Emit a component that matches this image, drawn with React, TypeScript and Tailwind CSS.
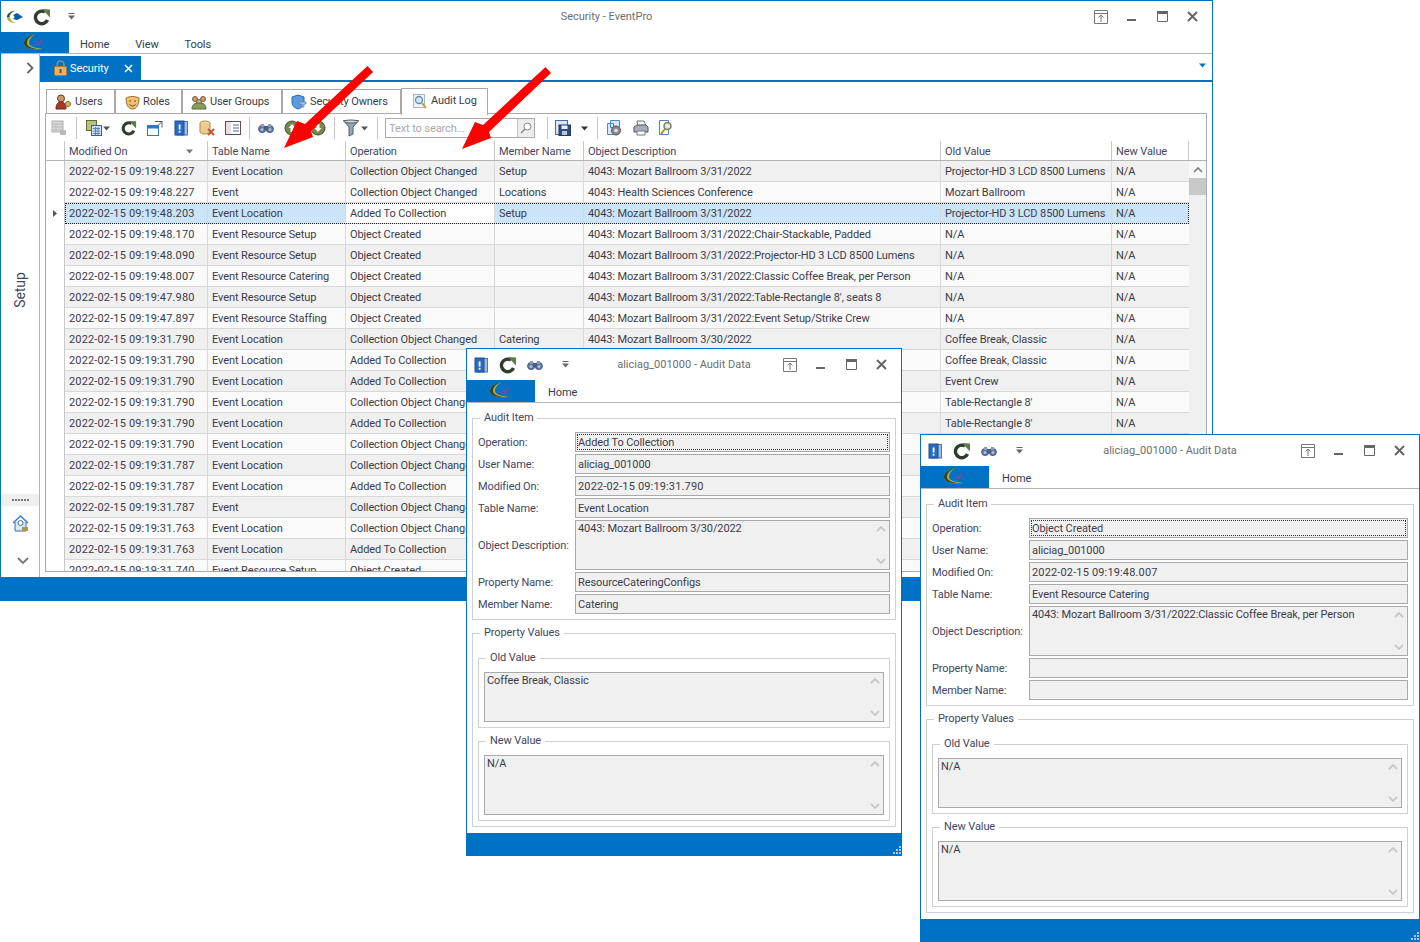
import type { ReactNode } from "react";

const rows = [
  ["2022-02-15 09:19:48.227", "Event Location", "Collection Object Changed", "Setup", "4043: Mozart Ballroom 3/31/2022", "Projector-HD 3 LCD 8500 Lumens"],
  ["2022-02-15 09:19:48.227", "Event", "Collection Object Changed", "Locations", "4043: Health Sciences Conference", "Mozart Ballroom"],
  ["2022-02-15 09:19:48.203", "Event Location", "Added To Collection", "Setup", "4043: Mozart Ballroom 3/31/2022", "Projector-HD 3 LCD 8500 Lumens"],
  ["2022-02-15 09:19:48.170", "Event Resource Setup", "Object Created", "", "4043: Mozart Ballroom 3/31/2022:Chair-Stackable, Padded", "N/A"],
  ["2022-02-15 09:19:48.090", "Event Resource Setup", "Object Created", "", "4043: Mozart Ballroom 3/31/2022:Projector-HD 3 LCD 8500 Lumens", "N/A"],
  ["2022-02-15 09:19:48.007", "Event Resource Catering", "Object Created", "", "4043: Mozart Ballroom 3/31/2022:Classic Coffee Break, per Person", "N/A"],
  ["2022-02-15 09:19:47.980", "Event Resource Setup", "Object Created", "", "4043: Mozart Ballroom 3/31/2022:Table-Rectangle 8', seats 8", "N/A"],
  ["2022-02-15 09:19:47.897", "Event Resource Staffing", "Object Created", "", "4043: Mozart Ballroom 3/31/2022:Event Setup/Strike Crew", "N/A"],
  ["2022-02-15 09:19:31.790", "Event Location", "Collection Object Changed", "Catering", "4043: Mozart Ballroom 3/30/2022", "Coffee Break, Classic"],
  ["2022-02-15 09:19:31.790", "Event Location", "Added To Collection", "", "", "Coffee Break, Classic"],
  ["2022-02-15 09:19:31.790", "Event Location", "Added To Collection", "", "", "Event Crew"],
  ["2022-02-15 09:19:31.790", "Event Location", "Collection Object Changed", "", "", "Table-Rectangle 8'"],
  ["2022-02-15 09:19:31.790", "Event Location", "Added To Collection", "", "", "Table-Rectangle 8'"],
  ["2022-02-15 09:19:31.790", "Event Location", "Collection Object Changed", "", "", ""],
  ["2022-02-15 09:19:31.787", "Event Location", "Collection Object Changed", "", "", ""],
  ["2022-02-15 09:19:31.787", "Event Location", "Added To Collection", "", "", ""],
  ["2022-02-15 09:19:31.787", "Event", "Collection Object Changed", "", "", ""],
  ["2022-02-15 09:19:31.763", "Event Location", "Collection Object Changed", "", "", ""],
  ["2022-02-15 09:19:31.763", "Event Location", "Added To Collection", "", "", ""],
  ["2022-02-15 09:19:31.740", "Event Resource Setup", "Object Created", "", "", ""],
];

function LogoBlock() {
  return (
    <svg width="24" height="20" viewBox="0 0 24 20">
      <path d="M13 1C5 2 0 7 1 11c1 4 8 6 19 5-9-1-14-3-14-6 0-4 3-7 7-9z" fill="#b5ad4c" />
      <path d="M13 1C7 3 4 6 4 10c0 3 4 5 10 6-8 0-12-2-13-5C0 7 5 2 13 1z" fill="#33452f" />
      <path d="M10 12l11-7-3 7z" fill="#5a55a8" />
    </svg>
  );
}

function LogoSmall() {
  return (
    <svg width="18" height="16" viewBox="0 0 18 16">
      <path d="M9 2C4 2 1 5 1 8c0 4 4 6 9 6-4-1-6-3-6-6 0-3 2-5 5-6z" fill="#b5ad4c" />
      <path d="M9 2C5 2 1 5 1 8l2 0c0-3 3-5 6-6z" fill="#24404f" />
      <path d="M7 6l4-2 6 4-6 3-4-1c2-1 2-3 0-4z" fill="#0c5ea8" />
    </svg>
  );
}

function Refresh() {
  return (
    <svg width="18" height="18" viewBox="0 0 18 18">
      <path d="M12 4A6.300 6.300 0 1 0 14.500 12" fill="none" stroke="#2f3d2d" strokeWidth="3.400" />
      <path d="M9 1l8 .5 0 8z" fill="#5e7d46" />
    </svg>
  );
}

function BookIcon() {
  return (
    <svg width="16" height="16" viewBox="0 0 16 16">
      <rect x="4" y="1.500" width="10.500" height="13.500" fill="#9dbde4" stroke="#4a78b0" />
      <rect x="2" y="1" width="9" height="14" fill="#2a6cc0" stroke="#1c4f94" />
      <rect x="5.700" y="4.500" width="1.800" height="5" fill="#fff" />
      <rect x="5.700" y="10.800" width="1.800" height="1.800" fill="#fff" />
    </svg>
  );
}

function Binoculars() {
  return (
    <svg width="16" height="16" viewBox="0 0 16 16">
      <circle cx="4.200" cy="9" r="3.600" fill="#5d78a6" stroke="#4a5a7c" />
      <circle cx="11.800" cy="9" r="3.600" fill="#5d78a6" stroke="#4a5a7c" />
      <rect x="3" y="4" width="3" height="3" fill="#8a9aba" />
      <rect x="10" y="4" width="3" height="3" fill="#8a9aba" />
      <rect x="6" y="6" width="4" height="4" fill="#4b5c7e" />
      <circle cx="4" cy="9.500" r="1.500" fill="#a9bcd9" />
      <circle cx="12" cy="9.500" r="1.500" fill="#a9bcd9" />
    </svg>
  );
}

function Caret({ color = "#555" }: { color?: string }) {
  return (
    <svg width="7" height="5" viewBox="0 0 7 5" className="block">
      <path d="M0 0.500h7L3.500 4.500z" fill={color} />
    </svg>
  );
}

function QatDrop() {
  return (
    <svg width="7" height="7" viewBox="0 0 7 7" className="block">
      <rect x="0.500" y="0" width="6" height="1" fill="#666" />
      <path d="M0 2.500h7L3.500 6.500z" fill="#666" />
    </svg>
  );
}

function PinBtn() {
  return (
    <svg width="14" height="14" viewBox="0 0 14 14">
      <path d="M.5.500h13v13H.5zM.5 3.500h13" fill="none" stroke="#777" />
      <path d="M7 12V5M4.500 7.500L7 5l2.500 2.500" fill="none" stroke="#777" />
    </svg>
  );
}

function WindowButtons() {
  return (
    <div className="flex items-center pr-[5px] h-full">
      <div className="w-[30px] flex justify-center"><PinBtn /></div>
      <div className="w-[31px] flex justify-center">
        <svg width="10" height="14" viewBox="0 0 10 14"><rect y="9" width="9" height="2" fill="#666" /></svg>
      </div>
      <div className="w-[30px] flex justify-center">
        <svg width="11" height="11" viewBox="0 0 11 11"><path d="M.5 2.500h10v8H.5z" fill="none" stroke="#666" /><rect width="11" height="2.500" fill="#666" /></svg>
      </div>
      <div className="w-[30px] flex justify-center">
        <svg width="11" height="11" viewBox="0 0 11 11"><path d="M1 1l9 9M10 1l-9 9" fill="none" stroke="#666" strokeWidth="2" /></svg>
      </div>
    </div>
  );
}

function Grip() {
  const dots = [[10, 1], [7, 4], [10, 4], [4, 7], [7, 7], [10, 7]];
  return (
    <svg width="12" height="9" viewBox="0 0 12 9">
      {dots.map(([x, y]) => <rect key={`${x}-${y}`} x={x} y={y} width="2" height="2" fill="#a9cbe8" />)}
    </svg>
  );
}

function Legend({ children }: { children: ReactNode }) {
  return <legend className="ml-[2px] px-[4px] h-[16px] leading-[16px] text-[#44465e]">{children}</legend>;
}

function Field({ label, value, focus, tall, stamp }: { label: string; value: string; focus?: boolean; tall?: boolean; stamp?: boolean }) {
  return (
    <div className="flex">
      <div className={`w-[97px] shrink-0 flex items-center whitespace-nowrap text-[#44465e] ${tall ? "h-[50px]" : "h-[20px]"}`}>{label}</div>
      {tall ? <Memo value={value} h="h-[50px]" /> : (
        <div className="flex-1 h-[20px] bg-[#f0f0f0] border border-[#a9a9a9] flex items-center p-[1px] min-w-0">
          <div className={`w-full h-full flex items-center whitespace-nowrap ${focus ? "outline-1 outline-dotted outline-[#333] -outline-offset-1" : ""} ${stamp ? "tracking-[0.15px]" : ""} pl-[1px] text-[#3c3c48]`}>{value}</div>
        </div>
      )}
    </div>
  );
}

function Memo({ value, h }: { value: string; h: string }) {
  return (
    <div className={`flex-1 min-w-0 ${h} bg-[#f0f0f0] border border-[#a9a9a9] flex justify-between`}>
      <div className="pl-[2px] leading-[14px] pt-[1px] text-[#3c3c48] whitespace-nowrap">{value}</div>
      <div className="w-[16px] shrink-0 flex flex-col justify-between items-center py-[5px]">
        <svg width="10" height="6" viewBox="0 0 10 6"><path d="M1 5l4-4 4 4" fill="none" stroke="#c8c8c8" strokeWidth="1.800" /></svg>
        <svg width="10" height="6" viewBox="0 0 10 6"><path d="M1 1l4 4 4-4" fill="none" stroke="#c8c8c8" strokeWidth="1.800" /></svg>
      </div>
    </div>
  );
}

type AuditData = {
  operation: string; user: string; modified: string; table: string; description: string;
  property: string; member: string; oldValue: string; newValue: string;
};

function AuditDialog({ className, data }: { className: string; data: AuditData }) {
  return (
    <div className={`absolute bg-white border border-[#0072c6] flex flex-col ${className}`}>
      <div className="h-[31px] shrink-0 relative flex items-center justify-between">
        <div className="flex items-center">
          <div className="ml-[6px]"><BookIcon /></div>
          <div className="ml-[10px]"><Refresh /></div>
          <div className="ml-[10px]"><Binoculars /></div>
          <div className="ml-[19px]"><QatDrop /></div>
        </div>
        <div className="absolute inset-x-0 pb-[1px] text-center tracking-normal text-[#6e6e6e] pointer-events-none">aliciag_001000 - Audit Data</div>
        <WindowButtons />
      </div>
      <div className="h-[23px] shrink-0 flex border-b border-[#b4b4b4]">
        <div className="w-[68px] bg-[#0072c6] flex items-center justify-center"><LogoBlock /></div>
        <div className="ml-[13px] flex items-center text-[#333c4e] pt-[2px]">Home</div>
      </div>
      <div className="px-[5px] pt-[7px] flex-1 flex flex-col min-w-0">
        <fieldset className="min-w-0 border border-[#d0d0d0] px-[5px] pb-[5px]">
          <Legend>Audit Item</Legend>
          <div className="pt-[6px] flex flex-col gap-[2px]">
            <Field label="Operation:" value={data.operation} focus />
            <Field label="User Name:" value={data.user} />
            <Field label="Modified On:" value={data.modified} stamp />
            <Field label="Table Name:" value={data.table} />
            <Field label="Object Description:" value={data.description} tall />
            <Field label="Property Name:" value={data.property} />
            <Field label="Member Name:" value={data.member} />
          </div>
        </fieldset>
        <fieldset className="min-w-0 mt-[5px] border border-[#d0d0d0] px-[5px] pb-[5px]">
          <Legend>Property Values</Legend>
          <fieldset className="min-w-0 mt-[9px] border border-[#d0d0d0] px-[5px] pb-[5px]">
            <Legend>Old Value</Legend>
            <div className="pt-[6px] flex"><Memo value={data.oldValue} h="h-[50px]" /></div>
          </fieldset>
          <fieldset className="min-w-0 mt-[5px] border border-[#d0d0d0] px-[5px] pb-[5px]">
            <Legend>New Value</Legend>
            <div className="pt-[6px] flex"><Memo value={data.newValue} h="h-[60px]" /></div>
          </fieldset>
        </fieldset>
      </div>
      <div className="h-[23px] shrink-0 bg-[#0072c6] flex items-end justify-end pr-[1px] pb-[2px] -mx-[1px] -mb-[1px]"><Grip /></div>
    </div>
  );
}

function SubTab({ icon, label, active, className }: { icon: ReactNode; label: string; active?: boolean; className: string }) {
  return (
    <div className={`${className} shrink-0 border border-[#a9a9a9] flex items-center whitespace-nowrap text-[#3c3c48] ${active ? "h-[27px] border-b-0 bg-white z-10 -mb-[1px]" : "h-[25px] border-b-0"}`}>
      {icon}
      <span className={`ml-[3px] ${active ? "pb-[3px]" : "pb-[1px]"}`}>{label}</span>
    </div>
  );
}

function Grid() {
  return (
    <svg width="16" height="16" viewBox="0 0 16 16">
      <rect x="1" y="1" width="11" height="11" fill="#d8d8d8" stroke="#b0b0b0" />
      <path d="M1 4h11M1 7h11M1 10h11M5 4v8" stroke="#bdbdbd" />
      <rect x="9" y="10" width="6" height="5" rx="1" fill="#b8b8b8" />
    </svg>
  );
}

function Sep({ className }: { className: string }) {
  return <div className={`${className} w-px h-[22px] bg-[#c4c4c4]`} />;
}

function Toolbar() {
  return (
    <div className="h-[27px] flex items-center pl-[5px] pt-[1px]">
      <Grid />
      <Sep className="ml-[9px]" />
      <svg className="ml-[9px]" width="16" height="16" viewBox="0 0 16 16">
        <rect x=".5" y=".5" width="10" height="10" fill="#b9c47a" stroke="#5c6b2e" />
        <rect x="5.500" y="5.500" width="10" height="10" fill="#cfe0f5" stroke="#2e62a8" />
        <path d="M7 8.500h7M7 11h7M7 13.500h7M9.500 7v8M12 7v8" stroke="#5684c0" />
      </svg>
      <div className="ml-[1px]"><Caret /></div>
      <div className="ml-[11px] w-[16px] h-[16px] flex items-center justify-center"><Refresh /></div>
      <svg className="ml-[10px]" width="16" height="16" viewBox="0 0 16 16">
        <rect x=".5" y="5.500" width="11" height="10" fill="#fff" stroke="#2f78c4" />
        <rect x=".5" y="5.500" width="11" height="3" fill="#2f78c4" />
        <path d="M8 1.500h7v6M15 1.500l-4 4" fill="none" stroke="#556" />
      </svg>
      <div className="ml-[10px]"><BookIcon /></div>
      <svg className="ml-[10px]" width="16" height="16" viewBox="0 0 16 16">
        <ellipse cx="6" cy="3" rx="5" ry="2" fill="#f2d9a6" stroke="#b08a4a" />
        <path d="M1 3v9c0 1 2 2 5 2s5-1 5-2V3" fill="#eccb8e" stroke="#b08a4a" />
        <path d="M9 9l6 6M15 9l-6 6" stroke="#c8553a" strokeWidth="2" />
      </svg>
      <svg className="ml-[10px]" width="16" height="16" viewBox="0 0 16 16">
        <rect x=".5" y="1.500" width="15" height="13" fill="#fff" stroke="#6a4a4a" />
        <rect x="1" y="2" width="5" height="12" fill="#eadede" />
        <path d="M8 5h6M8 8h6M8 11h6" stroke="#4a6a9a" />
      </svg>
      <Sep className="ml-[8px]" />
      <div className="ml-[8px]"><Binoculars /></div>
      <svg className="ml-[10px]" width="16" height="16" viewBox="0 0 16 16">
        <circle cx="8" cy="8" r="7" fill="#76884a" stroke="#3d4f2a" />
        <path d="M8 4l3.500 4H9.500v4h-3V8H4.500z" fill="#fff" />
      </svg>
      <svg className="ml-[10px]" width="16" height="16" viewBox="0 0 16 16">
        <circle cx="8" cy="8" r="7" fill="#76884a" stroke="#3d4f2a" />
        <path d="M8 12l3.500-4H9.500V4h-3v4H4.500z" fill="#fff" />
      </svg>
      <Sep className="ml-[8px]" />
      <svg className="ml-[8px]" width="16" height="18" viewBox="0 0 16 18">
        <path d="M.5 1.500h15L10 8v7l-4 2V8z" fill="#9aa4ac" stroke="#555f66" />
        <ellipse cx="8" cy="2.500" rx="7" ry="1.500" fill="#d4dade" stroke="#555f66" />
      </svg>
      <div className="ml-[2px]"><Caret /></div>
      <Sep className="ml-[9px]" />
      <div className="ml-[7px] w-[150px] h-[20px] border border-[#a9a9a9] flex items-center">
        <div className="flex-1 pl-[3px] text-[#a9a9a9]">Text to search...</div>
        <div className="w-[17px] h-full bg-[#ededed] border-l border-[#c4c4c4] flex items-center justify-center">
          <svg width="12" height="12" viewBox="0 0 12 12"><circle cx="7.500" cy="4.500" r="3.500" fill="#fff" stroke="#8a8a8a" /><path d="M5 7l-4 4" stroke="#8a8a8a" strokeWidth="1.500" /></svg>
        </div>
      </div>
      <Sep className="ml-[12px]" />
      <svg className="ml-[7px]" width="16" height="16" viewBox="0 0 16 16">
        <rect x=".5" y=".5" width="12" height="14" fill="#dbe6f4" stroke="#3c6eb0" />
        <rect x="4" y="5" width="11.500" height="10.500" fill="#2c4f80" stroke="#1f3a60" />
        <rect x="6.500" y="5.500" width="6" height="3.500" fill="#e8eef6" />
        <rect x="7" y="11" width="5" height="4" fill="#b8c8dc" />
      </svg>
      <div className="ml-[10px]"><Caret color="#333" /></div>
      <Sep className="ml-[9px]" />
      <svg className="ml-[8px]" width="16" height="16" viewBox="0 0 16 16">
        <path d="M4.500.500h9v7h-9zM1.500 3.500h6v11h-6z" fill="#d8e8f8" stroke="#4a86c8" />
        <circle cx="10" cy="10.500" r="4.500" fill="#8a8a8a" stroke="#555" />
        <circle cx="10" cy="10.500" r="1.800" fill="#e4e4e4" />
      </svg>
      <svg className="ml-[11px]" width="16" height="16" viewBox="0 0 16 16">
        <path d="M4 1h7l2 5H5z" fill="#f4f4f4" stroke="#777" />
        <path d="M1 7l3-2h9l2 2v5H1z" fill="#a8aeb6" stroke="#555" />
        <path d="M4 11h8v4H4z" fill="#fff" stroke="#777" />
      </svg>
      <svg className="ml-[9px]" width="16" height="16" viewBox="0 0 16 16">
        <path d="M1.500.500h9v14h-9z" fill="#fff" stroke="#4a86c8" />
        <circle cx="9.500" cy="6" r="3.500" fill="#d8e8f8" stroke="#8a7a4a" strokeWidth="1.500" />
        <path d="M7 9l-4 5" stroke="#a88a3a" strokeWidth="2" />
      </svg>
    </div>
  );
}

function Header() {
  const cells: [string, string][] = [
    ["", "w-[19px]"], ["Modified On", "w-[143px]"], ["Table Name", "w-[138px]"], ["Operation", "w-[149px]"],
    ["Member Name", "w-[89px]"], ["Object Description", "w-[357px]"], ["Old Value", "w-[171px]"], ["New Value", "w-[77px]"],
  ];
  return (
    <div className="flex h-[20px] border-b border-[#b4b4b4] text-[#44465e]">
      {cells.map(([label, w]) => (
        <div key={label} className={`${w} shrink-0 border-r border-[#c8c8c8] pl-[4px] pt-[1px] flex items-center justify-between whitespace-nowrap overflow-hidden`}>
          {label}
          {label === "Modified On" && <div className="mr-[14px]"><Caret color="#777" /></div>}
        </div>
      ))}
    </div>
  );
}

function Row({ row, index }: { row: string[]; index: number }) {
  const selected = index === 2;
  const zebra = index % 2 === 0 ? "bg-[#f0f0f0]" : "bg-[#fafafa]";
  const bg = selected ? "bg-[#cce4f7]" : zebra;
  const cell = "shrink-0 border-r border-[#d8d8d8] pl-[4px] flex items-center whitespace-nowrap overflow-hidden";
  const values = [...row, "N/A"];
  return (
    <div className="flex h-[21px] relative">
      <div className="w-[19px] shrink-0 border-r border-[#c8c8c8] bg-white flex items-center justify-center">
        {selected && <svg width="4" height="7" viewBox="0 0 4 7"><path d="M0 0l4 3.500L0 7z" fill="#555" /></svg>}
      </div>
      <div className={`flex flex-1 border-b border-[#d8d8d8] text-[#3c3c48] ${bg} ${selected ? "outline-1 outline-dotted outline-[#222] -outline-offset-1" : ""}`}>
        <div className={`w-[143px] tracking-[0.15px] ${cell}`}>{values[0]}</div>
        <div className={`w-[138px] ${cell}`}>{values[1]}</div>
        <div className={`w-[149px] ${cell} ${selected ? "bg-white" : ""}`}>{values[2]}</div>
        <div className={`w-[89px] ${cell}`}>{values[3]}</div>
        <div className={`w-[357px] ${cell}`}>{values[4]}</div>
        <div className={`w-[171px] ${cell}`}>{values[5]}</div>
        <div className={`w-[77px] ${cell} border-r-0`}>{values[6]}</div>
      </div>
    </div>
  );
}

function Arrow({ className }: { className: string }) {
  return (
    <svg className={`absolute pointer-events-none ${className}`} width="96" height="88" viewBox="0 0 96 88">
      <path d="M85.500 1L91 7 29 66 31 72 2 83 15 56 23 59z" fill="#fe0000" />
    </svg>
  );
}

export default function App() {
  return (
    <div className="relative w-[1420px] h-[942px] overflow-hidden bg-white text-[11px] tracking-[-0.1px] leading-none font-['Roboto',sans-serif]">
      <div className="absolute left-0 top-0 w-[1213px] h-[601px] border border-[#0072c6] border-b-0 flex flex-col">
        <div className="h-[31px] shrink-0 relative flex items-center justify-between">
          <div className="flex items-center">
            <div className="ml-[5px]"><LogoSmall /></div>
            <div className="ml-[9px]"><Refresh /></div>
            <div className="ml-[17px]"><QatDrop /></div>
          </div>
          <div className="absolute inset-x-0 pb-[1px] text-center tracking-normal text-[#6e6e6e] pointer-events-none">Security - EventPro</div>
          <WindowButtons />
        </div>
        <div className="h-[22px] shrink-0 flex border-b border-[#b4b4b4] text-[#333c4e]">
          <div className="w-[68px] bg-[#0072c6] flex items-center justify-center"><LogoBlock /></div>
          <div className="ml-[11px] flex items-center pt-[3px]">Home</div>
          <div className="ml-[26px] flex items-center pt-[3px]">View</div>
          <div className="ml-[26px] flex items-center pt-[3px]">Tools</div>
        </div>
        <div className="flex-1 flex min-h-0">
          <div className="w-[39px] shrink-0 border-r border-[#b4b4b4] flex flex-col items-center text-[#44465e]">
            <div className="h-[28px] w-full flex items-center justify-end pr-[5px]">
              <svg width="8" height="12" viewBox="0 0 8 12"><path d="M1.500 1l5 5-5 5" fill="none" stroke="#666" strokeWidth="1.800" /></svg>
            </div>
            <div className="h-[412px] flex items-center pt-[4px]">
              <div className="-rotate-90 text-[14px] whitespace-nowrap">Setup</div>
            </div>
            <div className="h-[12px] w-full bg-[#efefef] flex items-center justify-center gap-[1px]">
              {[0, 1, 2, 3, 4, 5].map((i) => <div key={i} className="w-[2px] h-[2px] bg-[#777]" />)}
            </div>
            <div className="mt-[9px]">
              <svg width="17" height="17" viewBox="0 0 17 17">
                <path d="M1 8l7.500-7L16 8" fill="none" stroke="#3a80c8" strokeWidth="1.500" />
                <path d="M3 7v9h11V7" fill="#dbe8f6" stroke="#3a6ea8" />
                <circle cx="8.500" cy="8" r="2.500" fill="#fff" stroke="#3a6ea8" />
                <rect x="10" y="12" width="6" height="4" fill="#a89a4a" />
              </svg>
            </div>
            <div className="mt-[25px] pl-[6px]">
              <svg width="12" height="8" viewBox="0 0 12 8"><path d="M1 1l5 5 5-5" fill="none" stroke="#777" strokeWidth="1.800" /></svg>
            </div>
          </div>
          <div className="flex-1 flex flex-col min-w-0">
            <div className="h-[28px] shrink-0 border-b-2 border-[#0072c6] flex justify-between pt-[2px] -mb-px">
              <div className="w-[101px] bg-[#0072c6] flex items-center text-white">
                <svg className="ml-[14px]" width="13" height="16" viewBox="0 0 13 16">
                  <path d="M3 7V4.500a3.500 3.500 0 0 1 7 0V7" fill="none" stroke="#8a8a92" strokeWidth="1.500" />
                  <rect x=".5" y="6.500" width="12" height="9" rx="1" fill="#efb060" stroke="#b07a30" />
                  <rect x="5.500" y="9" width="2" height="4" fill="#7a4a1a" />
                </svg>
                <span className="ml-[3px] w-[41px]">Security</span>
                <svg className="ml-[13px]" width="9" height="9" viewBox="0 0 9 9"><path d="M1 1l7 7M8 1L1 8" stroke="#fff" strokeWidth="1.500" /></svg>
              </div>
              <div className="pr-[6px] pt-[7px]"><Caret color="#0072c6" /></div>
            </div>
            <div className="flex-1 flex flex-col px-[5px] pt-[6px] pb-[5px] min-h-0">
              <div className="flex items-end h-[27px] shrink-0 ml-[1px] -mb-px">
                <SubTab className="w-[69px] pl-[8px]" label="Users" icon={
                  <svg width="17" height="17" viewBox="0 0 17 17">
                    <circle cx="6" cy="4.500" r="3.500" fill="#c89a6a" stroke="#6a3a2a" />
                    <path d="M1 15c0-5 2-7 5-7s5 2 5 7z" fill="#a83a2a" stroke="#6a2a1a" />
                    <circle cx="13" cy="10" r="2.500" fill="#e0b060" stroke="#8a6a2a" />
                  </svg>
                } />
                <SubTab className="w-[67px] pl-[9px]" label="Roles" icon={
                  <svg width="15" height="15" viewBox="0 0 15 15">
                    <path d="M1 3c4-2 9-2 13 0 0 6-2 11-6.500 11S1 9 1 3z" fill="#f0c070" stroke="#9a6a2a" />
                    <path d="M4 6h2M9 6h2M4.500 9.500c2 2 4 2 6 0" fill="none" stroke="#6a4a2a" />
                  </svg>
                } />
                <SubTab className="w-[100px] pl-[8px]" label="User Groups" icon={
                  <svg width="16" height="15" viewBox="0 0 16 15">
                    <circle cx="4" cy="4" r="2.500" fill="#c8a070" stroke="#7a5a3a" />
                    <circle cx="12" cy="4" r="2.500" fill="#c8a070" stroke="#7a5a3a" />
                    <circle cx="8" cy="7" r="2.500" fill="#d8b080" stroke="#7a5a3a" />
                    <path d="M1 14c0-4 2-6 7-6s7 2 7 6z" fill="#8a9a5a" stroke="#5a6a3a" />
                  </svg>
                } />
                <SubTab className="w-[119px] pl-[8px]" label="Security Owners" icon={
                  <svg width="16" height="16" viewBox="0 0 16 16">
                    <path d="M7 1l6 2v5c0 3-2 6-6 7-4-1-6-4-6-7V3z" fill="#5a9ae0" stroke="#2a6ab0" />
                    <path d="M8 8h7v2h-2v3h-2v-3H8z" fill="#a8c8e8" stroke="#5a7a9a" strokeWidth=".7" />
                  </svg>
                } />
                <SubTab active className="w-[87px] pl-[10px]" label="Audit Log" icon={
                  <svg width="16" height="16" viewBox="0 0 16 16">
                    <rect x="1.500" y=".500" width="11" height="13" fill="#eef3f8" stroke="#a8b4c0" />
                    <circle cx="7" cy="6" r="3.500" fill="#cfe4f6" stroke="#6a8aa8" strokeWidth="1.300" />
                    <path d="M10 9l4 5" stroke="#c89a3a" strokeWidth="2" />
                  </svg>
                } />
              </div>
              <div className="flex-1 min-h-0 border border-[#a9a9a9] flex flex-col overflow-hidden relative">
                <Toolbar />
                <Header />
                <div className="flex-1 min-h-0 flex">
                  <div className="w-[1143px] shrink-0 overflow-hidden">
                    {rows.map((row, i) => <Row key={i} row={row} index={i} />)}
                  </div>
                  <div className="flex-1 bg-[#f0f0f0] flex flex-col items-center">
                    <div className="h-[17px] w-full bg-[#f8f8f8] flex items-center justify-center">
                      <svg width="10" height="6" viewBox="0 0 10 6"><path d="M1 5l4-4 4 4" fill="none" stroke="#777" strokeWidth="1.500" /></svg>
                    </div>
                    <div className="h-[17px] w-full bg-[#c8c8c8]" />
                  </div>
                </div>
              </div>
            </div>
          </div>
        </div>
        <div className="h-[24px] shrink-0 bg-[#0072c6] -mx-px" />
      </div>

      <Arrow className="left-[282px] top-[65px]" />
      <Arrow className="left-[460px] top-[66px]" />

      <AuditDialog
        className="left-[466px] top-[348px] w-[436px] h-[508px]"
        data={{
          operation: "Added To Collection", user: "aliciag_001000", modified: "2022-02-15 09:19:31.790", table: "Event Location",
          description: "4043: Mozart Ballroom 3/30/2022", property: "ResourceCateringConfigs", member: "Catering",
          oldValue: "Coffee Break, Classic", newValue: "N/A",
        }}
      />
      <AuditDialog
        className="left-[920px] top-[434px] w-[500px] h-[508px]"
        data={{
          operation: "Object Created", user: "aliciag_001000", modified: "2022-02-15 09:19:48.007", table: "Event Resource Catering",
          description: "4043: Mozart Ballroom 3/31/2022:Classic Coffee Break, per Person", property: "", member: "",
          oldValue: "N/A", newValue: "N/A",
        }}
      />
    </div>
  );
}
